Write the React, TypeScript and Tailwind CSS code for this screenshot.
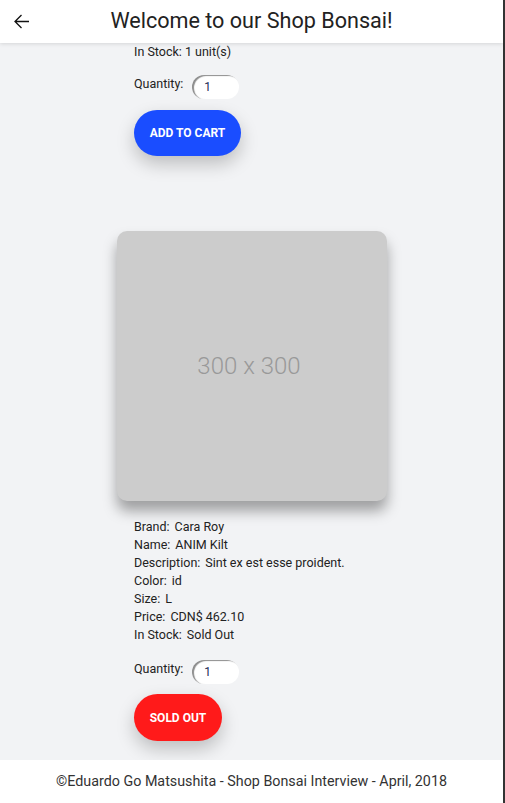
import React from "react";

type Product = {
  brand: string;
  name: string;
  description: string;
  color: string;
  size: string;
  price: string;
  stock: number;
};

const product: Product = {
  brand: "Cara Roy",
  name: "ANIM Kilt",
  description: "Sint ex est esse proident.",
  color: "id",
  size: "L",
  price: "462.10",
  stock: 0,
};

function BackArrow() {
  return (
    <svg width="17" height="17" viewBox="0 0 17 17" fill="none" stroke="#111" strokeWidth="1.3">
      <path d="M2 8.5h14M8.5 2L2 8.5 8.5 15" />
    </svg>
  );
}

function Field({ label, value }: { label: string; value: string }) {
  return (
    <div className="leading-[18px]">
      <span className="mr-[5px]">{label}:</span>
      <span>{value}</span>
    </div>
  );
}

function QuantityRow() {
  return (
    <div className="flex items-center gap-[9px]">
      <span className="-mt-[5px]">Quantity:</span>
      <div className="flex h-[24px] w-[47px] items-center rounded-full bg-white pl-[12px] text-[12px] text-[#1a2a55] shadow-[inset_2px_1px_1px_rgba(0,0,0,0.45)]">
        1
      </div>
    </div>
  );
}

function CartButton({ soldOut }: { soldOut: boolean }) {
  return (
    <button
      className={
        soldOut
          ? "h-[47px] w-[88px] rounded-full bg-[#ff1a1a] text-[12px] font-bold uppercase text-white shadow-[0_8px_18px_rgba(0,0,0,0.22)]"
          : "h-[46px] w-[107px] rounded-full bg-[#1a4dff] text-[12px] font-bold uppercase text-white shadow-[0_8px_18px_rgba(0,0,0,0.22)]"
      }
    >
      {soldOut ? "Sold Out" : "Add to Cart"}
    </button>
  );
}

export default function App() {
  return (
    <div
      className="flex h-[803px] w-[505px] flex-col overflow-hidden border-r-2 border-[#333] bg-white text-[12.5px] text-[#222]"
      style={{ fontFamily: "Roboto, 'Liberation Sans', sans-serif" }}
    >
      <header className="relative z-10 flex h-[43px] shrink-0 items-center bg-white shadow-[0_1px_4px_rgba(0,0,0,0.12)]">
        <div className="pl-[13px]">
          <BackArrow />
        </div>
        <h1 className="flex-1 pr-[30px] text-center text-[21.6px] text-[#222]">
          Welcome to our Shop Bonsai!
        </h1>
      </header>

      <main className="flex-1 overflow-hidden bg-[#f2f3f5]">
        <div className="flex flex-col pl-[134px]">
          <div className="leading-[18px]">In Stock: 1 unit(s)</div>
          <div className="mt-[14px]">
            <QuantityRow />
          </div>
          <div className="mt-[11px]">
            <CartButton soldOut={false} />
          </div>
        </div>

        <div className="mt-[75px] flex justify-center pl-[1px]">
          <div className="flex h-[270px] w-[270px] items-center justify-center rounded-[10px] bg-[#cccccc] pr-[6px] text-[24px] font-light text-[#999] shadow-[0_10px_14px_rgba(0,0,0,0.35)]">
            300 x 300
          </div>
        </div>

        <div className="mt-[17px] flex flex-col pl-[134px]">
          <Field label="Brand" value={product.brand} />
          <Field label="Name" value={product.name} />
          <Field label="Description" value={product.description} />
          <Field label="Color" value={product.color} />
          <Field label="Size" value={product.size} />
          <Field label="Price" value={`CDN$ ${product.price}`} />
          <Field label="In Stock" value={product.stock > 0 ? `${product.stock} unit(s)` : "Sold Out"} />
          <div className="mt-[16px]">
            <QuantityRow />
          </div>
          <div className="mt-[10px]">
            <CartButton soldOut={product.stock === 0} />
          </div>
        </div>
      </main>

      <footer className="flex h-[43px] shrink-0 items-center justify-center rounded-b-[4px] bg-white text-[14.3px] text-[#333]">
        ©Eduardo Go Matsushita - Shop Bonsai Interview - April, 2018
      </footer>
    </div>
  );
}
